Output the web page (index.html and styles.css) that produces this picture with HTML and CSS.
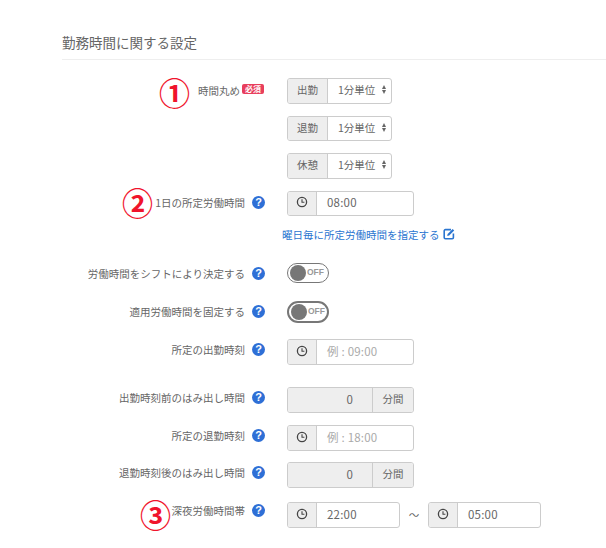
FILE: index.html
```html
<!DOCTYPE html>
<html lang="ja">
<head>
    <meta charset="UTF-8">
    <meta name="viewport" content="width=device-width, initial-scale=1.0">
    <title>勤務時間に関する設定</title>
    <link rel="stylesheet" href="styles.css">
</head>
<body>
    <svg class="icon-defs" width="0" height="0">
        <symbol id="clock" viewBox="0 0 12 12">
            <circle cx="6" cy="6" r="4.6" fill="none" stroke="#444" stroke-width="1.3"/>
            <path d="M6 3.2V6.3H8.4" fill="none" stroke="#444" stroke-width="1.1"/>
        </symbol>
    </svg>
    <div class="section">
        <h2 class="section-title">勤務時間に関する設定</h2>

        <div class="form-row">
            <span class="mark mark-1">①</span>
            <div class="label label-badge">時間丸め<span class="badge">必須</span></div>
            <div class="group group-select">
                <span class="addon addon-text">出勤</span>
                <div class="select">1分単位<span class="arrows"></span></div>
            </div>
        </div>
        <div class="form-row">
            <div class="label"></div>
            <div class="group group-select">
                <span class="addon addon-text">退勤</span>
                <div class="select">1分単位<span class="arrows"></span></div>
            </div>
        </div>
        <div class="form-row">
            <div class="label"></div>
            <div class="group group-select">
                <span class="addon addon-text">休憩</span>
                <div class="select">1分単位<span class="arrows"></span></div>
            </div>
        </div>
        <div class="form-row">
            <span class="mark mark-2">②</span>
            <div class="label">1日の所定労働時間<span class="help">?</span></div>
            <div class="group group-time">
                <span class="addon addon-icon"><svg class="clock"><use href="#clock"/></svg></span>
                <div class="input">08:00</div>
            </div>
        </div>
        <div class="link-row">
            <a class="link" href="#">曜日毎に所定労働時間を指定する
                <svg class="edit" viewBox="0 0 12 12">
                    <path d="M8 1.6H2.4A1.2 1.2 0 0 0 1.2 2.8V9.6A1.2 1.2 0 0 0 2.4 10.8H9.2A1.2 1.2 0 0 0 10.4 9.6V5.5" fill="none" stroke="#2a75d0" stroke-width="1.6"/>
                    <path d="M4.6 5.9L9.6 .9L11.2 2.5L6.2 7.5L4.2 7.9Z" fill="#2a75d0"/>
                </svg>
            </a>
        </div>
        <div class="form-row row-toggle-1">
            <div class="label label-low">労働時間をシフトにより決定する<span class="help">?</span></div>
            <div class="toggle"><span class="knob"></span>OFF</div>
        </div>
        <div class="form-row row-toggle-2">
            <div class="label label-low">適用労働時間を固定する<span class="help">?</span></div>
            <div class="toggle toggle-thick"><span class="knob"></span>OFF</div>
        </div>
        <div class="form-row row-start">
            <div class="label label-low">所定の出勤時刻<span class="help">?</span></div>
            <div class="group group-time">
                <span class="addon addon-icon"><svg class="clock"><use href="#clock"/></svg></span>
                <div class="input placeholder">例 : 09:00</div>
            </div>
        </div>
        <div class="form-row row-before">
            <div class="label label-low">出勤時刻前のはみ出し時間<span class="help">?</span></div>
            <div class="group group-time">
                <div class="input input-disabled">0</div>
                <span class="addon addon-unit">分間</span>
            </div>
        </div>
        <div class="form-row row-end">
            <div class="label label-low">所定の退勤時刻<span class="help">?</span></div>
            <div class="group group-time">
                <span class="addon addon-icon"><svg class="clock"><use href="#clock"/></svg></span>
                <div class="input placeholder">例 : 18:00</div>
            </div>
        </div>
        <div class="form-row row-after">
            <div class="label label-low">退勤時刻後のはみ出し時間<span class="help">?</span></div>
            <div class="group group-time">
                <div class="input input-disabled">0</div>
                <span class="addon addon-unit">分間</span>
            </div>
        </div>
        <div class="form-row row-night">
            <span class="mark mark-3">③</span>
            <div class="label label-high">深夜労働時間帯<span class="help">?</span></div>
            <div class="group group-night">
                <span class="addon addon-icon"><svg class="clock"><use href="#clock"/></svg></span>
                <div class="input">22:00</div>
            </div>
            <span class="tilde">～</span>
            <div class="group group-night">
                <span class="addon addon-icon"><svg class="clock"><use href="#clock"/></svg></span>
                <div class="input">05:00</div>
            </div>
        </div>
    </div>
</body>
</html>
```

FILE: styles.css
```css
html, body {
    height: 100%;
}
body {
    margin: 0;
    background: #fff;
    color: #666;
    font-family: "Noto Sans CJK JP", "Noto Sans", sans-serif;
    font-size: 10.5px;
    overflow: hidden;
}
.icon-defs {
    position: absolute;
}
.section {
    padding: 32px 0 0 62px;
}
.section-title {
    margin: 0 0 18px;
    padding-bottom: 7px;
    border-bottom: 1px solid #eee;
    font-size: 13.5px;
    font-weight: 400;
    line-height: 20px;
    color: #666;
}
.form-row {
    position: relative;
    display: flex;
    align-items: flex-start;
    margin-bottom: 12px;
}
.label {
    display: flex;
    align-items: center;
    justify-content: flex-end;
    flex: none;
    width: 203px;
    height: 23px;
    margin-right: 22px;
    white-space: nowrap;
}
.label-badge {
    height: 25px;
    padding-right: 1px;
    box-sizing: border-box;
}
.label-low {
    height: 21px;
}
.label-high {
    height: 17px;
}
.badge {
    margin: 0 0 3px 2px;
    padding: 0 3px;
    background: #e83e5c;
    border-radius: 2px;
    color: #fff;
    font-size: 8px;
    font-weight: 700;
    line-height: 10px;
}
.help {
    flex: none;
    width: 13px;
    height: 13px;
    margin-left: 7px;
    border-radius: 50%;
    background: #2e6fd6;
    color: #fff;
    font-family: "Liberation Sans", sans-serif;
    font-size: 11px;
    font-weight: 700;
    line-height: 13px;
    text-align: center;
}
.mark {
    position: absolute;
    color: #f0142c;
    font-size: 31px;
    line-height: 32px;
    font-weight: 700;
}
.mark-1 {
    left: 97px;
    top: -2px;
}
.mark-2 {
    left: 60px;
    top: -5px;
}
.mark-3 {
    left: 78px;
    top: -4px;
}
.group {
    display: flex;
    box-sizing: border-box;
    height: 25.5px;
    border: 1px solid #ccc;
    border-radius: 3px;
    background: #fff;
    overflow: hidden;
}
.group-select {
    width: 105px;
}
.group-time {
    width: 127px;
}
.group-night {
    width: 113px;
}
.addon {
    display: flex;
    align-items: center;
    justify-content: center;
    flex: none;
    box-sizing: border-box;
    background: #eee;
}
.addon-text {
    width: 40px;
    border-right: 1px solid #ccc;
    padding-bottom: 2px;
}
.addon-icon {
    width: 29px;
    border-right: 1px solid #ccc;
    padding-bottom: 2px;
}
.addon-unit {
    width: 41px;
    border-left: 1px solid #ccc;
    padding-bottom: 2px;
}
.clock {
    width: 12px;
    height: 12px;
}
.select {
    display: flex;
    align-items: center;
    box-sizing: border-box;
    flex: 1;
    padding: 0 0 2px 10px;
}
.arrows {
    position: relative;
    width: 5px;
    height: 9px;
    margin-left: 7px;
}
.arrows::before,
.arrows::after {
    content: "";
    position: absolute;
    left: 0;
    border-left: 2.5px solid transparent;
    border-right: 2.5px solid transparent;
}
.arrows::before {
    top: 0;
    border-bottom: 4px solid #666;
}
.arrows::after {
    bottom: 0;
    border-top: 4px solid #666;
}
.input {
    display: flex;
    align-items: center;
    flex: 1;
    padding: 0 0 2px 10px;
    font-size: 11.5px;
    letter-spacing: .2px;
}
.placeholder {
    color: #aaa;
}
.input-disabled {
    justify-content: flex-end;
    padding-right: 19px;
    background: #eee;
}
.link-row {
    margin: -3px 0 20px 220px;
    height: 18px;
}
.link {
    display: inline-flex;
    align-items: center;
    height: 18px;
    color: #2a75d0;
    text-decoration: none;
    white-space: nowrap;
}
.edit {
    width: 12px;
    height: 12px;
    margin-left: 3px;
}
.toggle {
    display: flex;
    align-items: center;
    box-sizing: border-box;
    width: 42px;
    height: 20px;
    padding: 0 0 2px 2px;
    border: 1.5px solid #777;
    border-radius: 11px;
    color: #999;
    font-family: "Liberation Sans", sans-serif;
    font-size: 8.5px;
    font-weight: 700;
}
.toggle-thick {
    height: 22px;
    border-width: 2px;
}
.knob {
    flex: none;
    width: 16px;
    height: 16px;
    margin: 2px 1px 0 0;
    border-radius: 50%;
    background: #777;
}
.row-toggle-1 {
    margin-bottom: 17px;
}
.row-toggle-2 {
    margin-bottom: 16px;
}
.row-start {
    margin-bottom: 22.5px;
}
.row-before {
    margin-bottom: 12.5px;
}
.row-end {
    margin-bottom: 11.5px;
}
.row-after {
    margin-bottom: 14.5px;
}
.tilde {
    width: 28px;
    line-height: 25px;
    text-align: center;
}
```
